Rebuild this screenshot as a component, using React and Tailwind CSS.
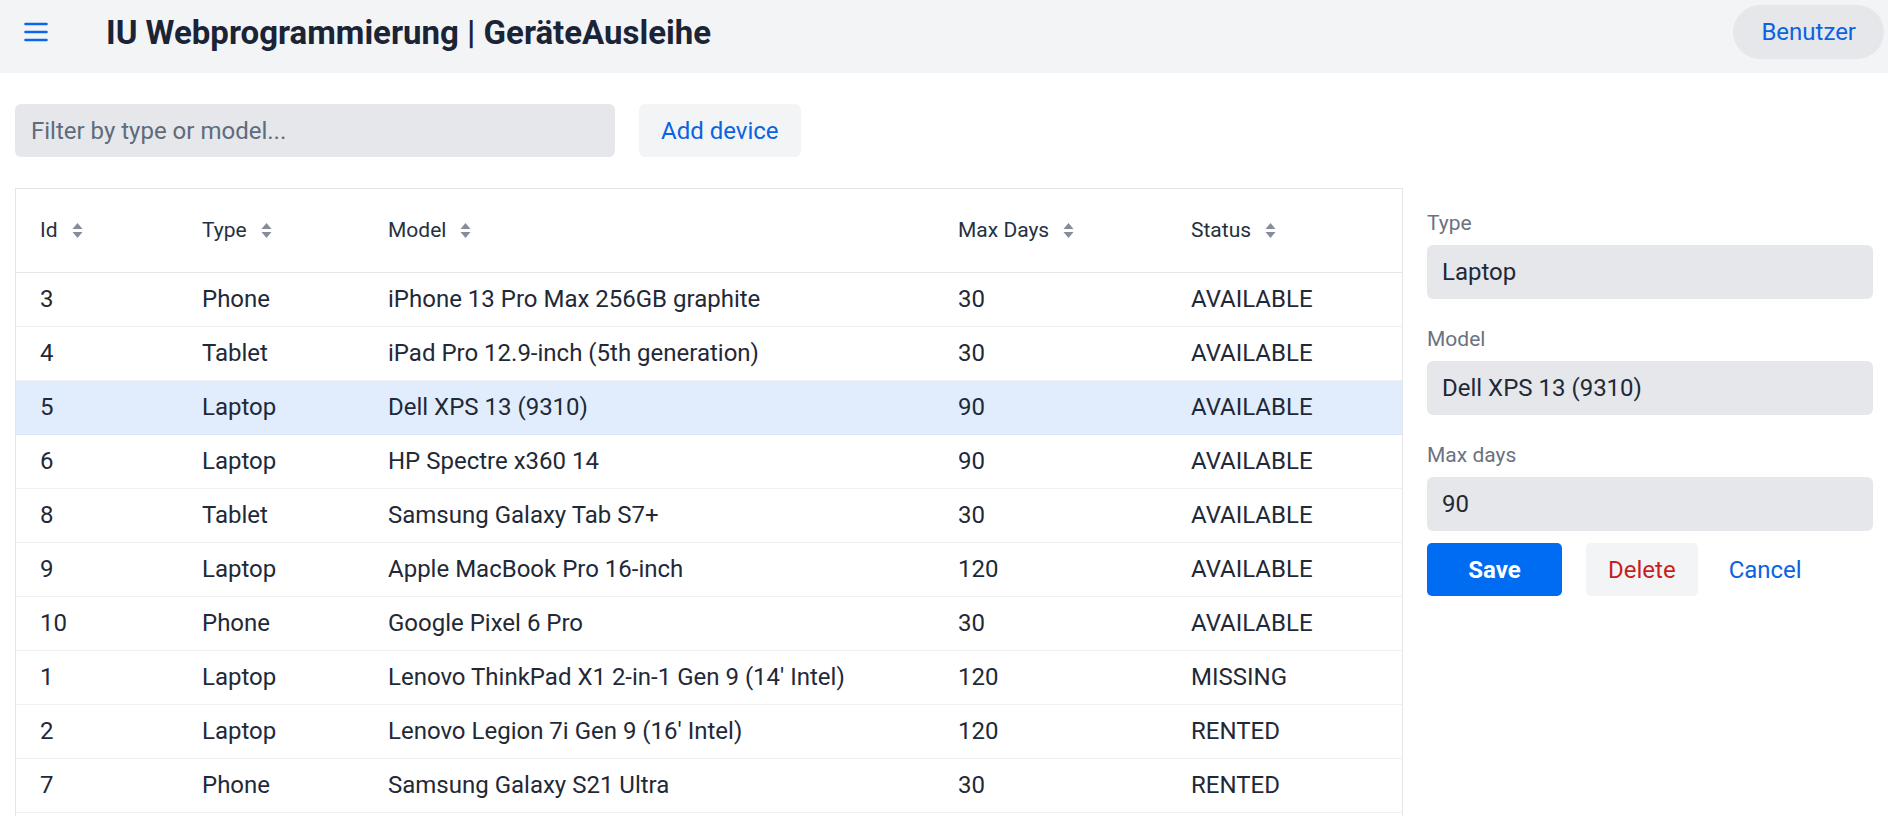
import React from "react";

const rows = [
  { id: 3, type: "Phone", model: "iPhone 13 Pro Max 256GB graphite", days: 30, status: "AVAILABLE" },
  { id: 4, type: "Tablet", model: "iPad Pro 12.9-inch (5th generation)", days: 30, status: "AVAILABLE" },
  { id: 5, type: "Laptop", model: "Dell XPS 13 (9310)", days: 90, status: "AVAILABLE", selected: true },
  { id: 6, type: "Laptop", model: "HP Spectre x360 14", days: 90, status: "AVAILABLE" },
  { id: 8, type: "Tablet", model: "Samsung Galaxy Tab S7+", days: 30, status: "AVAILABLE" },
  { id: 9, type: "Laptop", model: "Apple MacBook Pro 16-inch", days: 120, status: "AVAILABLE" },
  { id: 10, type: "Phone", model: "Google Pixel 6 Pro", days: 30, status: "AVAILABLE" },
  { id: 1, type: "Laptop", model: "Lenovo ThinkPad X1 2-in-1 Gen 9 (14' Intel)", days: 120, status: "MISSING" },
  { id: 2, type: "Laptop", model: "Lenovo Legion 7i Gen 9 (16' Intel)", days: 120, status: "RENTED" },
  { id: 7, type: "Phone", model: "Samsung Galaxy S21 Ultra", days: 30, status: "RENTED" },
];

function SortIcon() {
  return (
    <svg width="11" height="17" viewBox="0 0 11 17" className="shrink-0">
      <path d="M5.5 1 L10.5 7 L0.5 7 Z" fill="#858d9b" />
      <path d="M0.5 10 L10.5 10 L5.5 16 Z" fill="#858d9b" />
    </svg>
  );
}

function Hamburger() {
  return (
    <svg width="24" height="20" viewBox="0 0 24 20">
      <path d="M1.5 2 H22.5 M1.5 10 H22.5 M1.5 18 H22.5" stroke="#0b66e8" strokeWidth="2.6" strokeLinecap="round" />
    </svg>
  );
}

const headers = ["Id", "Type", "Model", "Max Days", "Status"];

export default function App() {
  return (
    <div className="min-h-screen bg-white font-[Roboto,sans-serif] text-[#1f2937]">
      <header className="h-[73px] bg-[#f3f4f6]">
        <div className="h-[64px] flex items-center pl-[24px] pr-[4px]">
          <Hamburger />
          <h1 className="ml-[58px] text-[33px] font-bold text-[#1b2436] leading-none">
            IU Webprogrammierung | GeräteAusleihe
          </h1>
          <button className="ml-auto h-[54px] px-[28px] rounded-full bg-[#e5e7eb] text-[24px] text-[#0a63e0]">
            Benutzer
          </button>
        </div>
      </header>

      <main className="px-[15px] pt-[31px]">
        <div className="flex items-center gap-[24px]">
          <div className="w-[600px] h-[53px] rounded-[6px] bg-[#e5e7eb] flex items-center px-[16px] text-[24px] text-[#5f6b7b]">
            Filter by type or model...
          </div>
          <button className="h-[53px] px-[22px] rounded-[6px] bg-[#f3f4f6] text-[24px] text-[#0a63e0]">
            Add device
          </button>
        </div>

        <div className="mt-[31px] flex items-start gap-[24px]">
          <div className="w-[1388px] min-h-[660px] border border-[#e2e5ea]">
            <table className="w-full table-fixed border-collapse">
              <colgroup>
                <col className="w-[162px]" />
                <col className="w-[186px]" />
                <col className="w-[570px]" />
                <col className="w-[233px]" />
                <col className="w-[235px]" />
              </colgroup>
              <thead>
                <tr className="h-[83px] border-b border-[#e5e7eb]">
                  {headers.map((h) => (
                    <th key={h} className="pl-[24px] text-left font-normal text-[21px] text-[#253040]">
                      <div className="flex items-center gap-[14px]">
                        <span>{h}</span>
                        <SortIcon />
                      </div>
                    </th>
                  ))}
                </tr>
              </thead>
              <tbody>
                {rows.map((r) => (
                  <tr
                    key={r.id}
                    className={
                      r.selected
                        ? "h-[54px] border-b border-[#d6e5f8] bg-[#e1edfd]"
                        : "h-[54px] border-b border-[#eff1f4]"
                    }
                  >
                    <td className="pl-[24px] text-[24px]">{r.id}</td>
                    <td className="pl-[24px] text-[24px]">{r.type}</td>
                    <td className="pl-[24px] text-[24px] whitespace-nowrap">{r.model}</td>
                    <td className="pl-[24px] text-[24px]">{r.days}</td>
                    <td className="pl-[24px] text-[24px]">{r.status}</td>
                  </tr>
                ))}
              </tbody>
            </table>
          </div>

          <div className="w-[448px] pt-[20px]">
            <label className="block text-[21px] leading-[31px] text-[#6b7280]">Type</label>
            <div className="mt-[6px] h-[54px] rounded-[6px] bg-[#e5e7eb] flex items-center px-[15px] text-[24px]">
              Laptop
            </div>
            <label className="mt-[25px] block text-[21px] leading-[31px] text-[#6b7280]">Model</label>
            <div className="mt-[6px] h-[54px] rounded-[6px] bg-[#e5e7eb] flex items-center px-[15px] text-[24px]">
              Dell XPS 13 (9310)
            </div>
            <label className="mt-[25px] block text-[21px] leading-[31px] text-[#6b7280]">Max days</label>
            <div className="mt-[6px] h-[54px] rounded-[6px] bg-[#e5e7eb] flex items-center px-[15px] text-[24px]">
              90
            </div>
            <div className="mt-[12px] flex items-center">
              <button className="w-[135px] h-[53px] rounded-[5px] bg-[#006cf2] text-white font-bold text-[24px]">
                Save
              </button>
              <button className="ml-[24px] h-[53px] px-[22px] rounded-[5px] bg-[#f3f4f6] text-[#c81e1e] text-[24px]">
                Delete
              </button>
              <button className="ml-[9px] h-[53px] px-[22px] rounded-[5px] text-[#0a63e0] text-[24px]">
                Cancel
              </button>
            </div>
          </div>
        </div>
      </main>
    </div>
  );
}
